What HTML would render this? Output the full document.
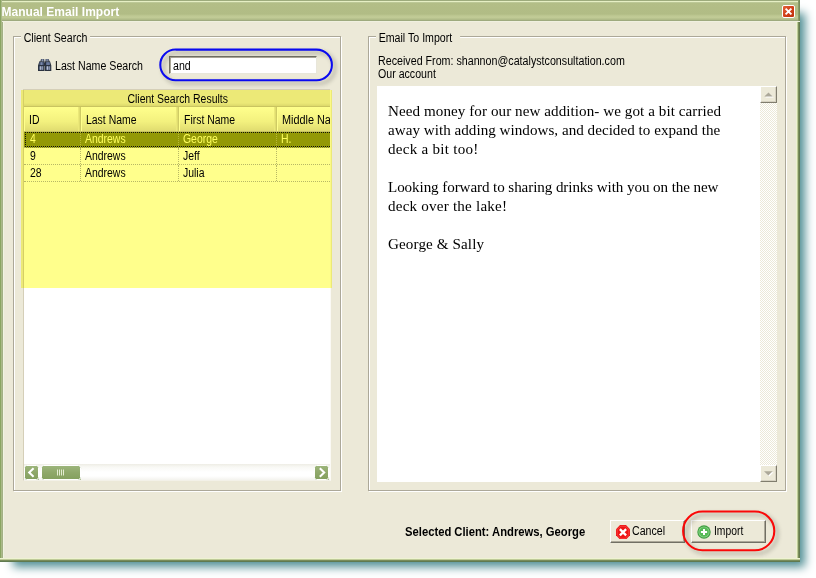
<!DOCTYPE html>
<html><head><meta charset="utf-8"><title>Manual Email Import</title>
<style>
html,body{margin:0;padding:0;}
body{width:816px;height:578px;position:relative;overflow:hidden;background:#fff;font-family:"Liberation Sans",sans-serif;font-size:11px;color:#000;}
.abs{position:absolute;}
#shadow{left:0;top:0;width:800px;height:562px;box-shadow:9px 9px 9px -4px #518f95;}
#win{left:0;top:0;width:800px;height:562px;background:#ece9d8;}
#title{left:2px;top:0;width:798px;height:22px;background:linear-gradient(#9dab7c 0,#9dab7c 1px,#e6efc4 1px,#e6efc4 2px,#bcc896 2px,#bcc896 3px,#b3be87 3px,#b1bc85 14px,#bfc994 16px,#c1cb96 18px,#b0bb88 19px,#b0bb88 20px,#9eaa7e 20px,#9eaa7e 21px,#f0f0e0 21px,#f0f0e0 22px);}
#title span{position:absolute;left:-0.5px;top:5px;font-weight:bold;font-size:12px;color:#fff;white-space:nowrap;letter-spacing:0.02px;}
#bl{left:0;top:0;width:4px;height:562px;background:linear-gradient(90deg,#8aa562 0,#8aa562 1px,#aab987 1px,#aab987 2px,#a3b085 2px,#a3b085 3px,#f1f4e2 3px,#f1f4e2 4px);}
#br{left:796px;top:21px;width:4px;height:541px;background:linear-gradient(90deg,#eef3d2 0,#eef3d2 1px,#bfcb98 1px,#bfcb98 2px,#7a8f5c 2px,#7a8f5c 3px,#647a4f 3px,#647a4f 4px);}
#bb{left:0;top:558px;width:800px;height:4px;background:linear-gradient(#eef3d2 0,#eef3d2 1px,#bfcb98 1px,#bfcb98 2px,#788c5a 2px,#788c5a 3px,#5f7a50 3px,#5f7a50 4px);}
.grp{border:1px solid #aca899;box-shadow:1px 1px 0 #fff, inset 1px 1px 0 #fff;}
.lbl{background:#ece9d8;white-space:nowrap;line-height:14px;font-size:12px;transform-origin:0 0;transform:scaleX(.885);}
.t{white-space:nowrap;line-height:14px;font-size:12px;transform-origin:0 0;transform:scaleX(.885);}

.sunk{border:1px solid;border-color:#aca899 #fff #fff #aca899;}
#grid{z-index:0;left:23px;top:89px;width:308px;height:392px;background:#fff;border:1px solid;border-color:#d5cfb8 #fbfaf5 #f3f1e8 #d5cfb8;box-sizing:border-box;overflow:hidden;}
#hl{z-index:1;left:21px;top:90px;width:311px;height:198px;background:#ffff8c;mix-blend-mode:multiply;}
.cap{left:0;top:0;width:308px;height:17px;box-sizing:border-box;background:linear-gradient(#ece9d8,#ece9d8 13px,#dcd8c4 16px);border-bottom:1px solid #c9c4ae;text-align:center;line-height:18px;}
.hd{top:17px;height:25px;z-index:2;background:linear-gradient(#fff,#f3f1e6 60%,#e0dccb);box-sizing:border-box;border-right:1px solid #cfcbb8;border-bottom:1px solid #c5c2b2;box-shadow:inset 1px 0 0 #fff, inset -1px 0 0 #e0ddcc, inset -2px 0 0 #ebe8da;line-height:27px;padding-left:5px;white-space:nowrap;overflow:hidden;}
.row{left:0;width:308px;height:17px;border-bottom:1px dotted #b8b8b8;box-sizing:border-box;}
.cell{position:absolute;top:0;height:16px;line-height:16px;padding-left:4px;box-sizing:border-box;border-right:1px dotted #b8b8b8;white-space:nowrap;overflow:hidden;}
.sel{background:#93990a;color:#ffffa8;}
.sel:after{content:"";position:absolute;left:1px;top:1px;right:0;bottom:0;border:1px dotted #111;border-right:none;}
.sel .cell{border-right-color:#b8b860;}
.btn{box-sizing:border-box;background:#ece9d8;border:1px solid;border-color:#fff #716f64 #716f64 #fff;box-shadow:inset -1px -1px 0 #aca899;}
.sb{background:#8fa66e;border:1px solid #fff;border-radius:2px;box-sizing:border-box;box-shadow:0 0 0 1px #a3b58a inset;}
.s{display:inline-block;font-size:12px;transform-origin:0 50%;transform:scaleX(.87);}
</style></head><body>
<div id="shadow" class="abs"></div>
<div id="win" class="abs"></div>
<div id="bl" class="abs"></div><div id="br" class="abs"></div><div id="bb" class="abs"></div>
<div id="title" class="abs"><span>Manual Email Import</span></div>

<div class="abs" style="left:798px;top:0;width:2px;height:21px;background:linear-gradient(90deg,#93a472,#6f8552);"></div>
<div class="abs" style="left:782px;top:5px;width:13px;height:13px;box-sizing:border-box;border:1px solid #fff;border-radius:2px;background:linear-gradient(135deg,#e2623a,#d2411a 50%,#bf300c);"></div>
<svg class="abs" style="left:783px;top:6px" width="11" height="11" viewBox="0 0 11 11"><path d="M2.6 2.6 L8.4 8.4 M8.4 2.6 L2.6 8.4" stroke="#fff" stroke-width="1.9" stroke-linecap="butt"/></svg>
<!-- left group -->
<div class="abs grp" style="left:13px;top:36px;width:326px;height:453px;"></div>
<div class="abs lbl" style="left:20.5px;top:31px;padding:0 3px;">Client Search</div>
<!-- right group -->
<div class="abs grp" style="left:368px;top:36px;width:416px;height:453px;"></div>
<div class="abs lbl" style="left:376px;top:31px;padding:0 9px 0 3px;">Email To Import</div>

<!-- search row -->
<svg class="abs" style="left:38px;top:59px" width="14" height="12" viewBox="0 0 14 12">
 <path d="M3 0h3.2l.3 2.4h-4.3z M7.5 0h3.2l1 2.4h-4.4z" fill="#525d74"/>
 <path d="M1.4 2.2h5.2v9.8h-6.6v-5.6z M7 2.2h5l1.3 4.2v5.6h-6.3z" fill="#2b3340"/>
 <rect x="5.8" y="3.6" width="2" height="3.4" fill="#2b3340"/>
 <rect x="1.5" y="3.2" width="4" height="2.8" fill="#5a6a8e"/>
 <rect x="8" y="3.2" width="4" height="2.8" fill="#5a6a8e"/>
 <rect x="1.2" y="7.3" width="4.2" height="3.5" fill="#66748f"/>
 <rect x="8" y="7.3" width="4.2" height="3.5" fill="#66748f"/>
 <rect x="2.1" y="7.3" width="1" height="3.5" fill="#b9c0d3"/><rect x="4" y="7.3" width=".8" height="3.5" fill="#949eb8"/>
 <rect x="9" y="7.3" width="1" height="3.5" fill="#b9c0d3"/><rect x="10.9" y="7.3" width=".8" height="3.5" fill="#949eb8"/>
 <rect x="4" y="0.3" width=".8" height="2" fill="#a4adc3"/><rect x="8.7" y="0.3" width=".8" height="2" fill="#a4adc3"/>
 <rect x="3" y="3.2" width=".8" height="2.8" fill="#8391b0"/><rect x="9.6" y="3.2" width=".8" height="2.8" fill="#8391b0"/>
</svg>
<div class="abs t" style="left:55px;top:59px;">Last Name Search</div>
<div class="abs" style="left:169px;top:56px;width:148px;height:18px;box-sizing:border-box;background:#fff;border:1px solid;border-color:#716f64 #e8e6da #e8e6da #716f64;box-shadow:inset 1px 1px 0 #aca899;"></div>
<div class="abs t" style="left:173px;top:59px;">and</div>
<svg class="abs" style="left:155px;top:44px;filter:drop-shadow(3px 3px 2.2px rgba(70,70,60,.45));" width="190" height="46" viewBox="0 0 190 46"><rect x="5.3" y="5.6" width="171.6" height="30.6" rx="15.3" fill="none" stroke="#0a0af0" stroke-width="2.05"/></svg>

<!-- grid -->
<div id="grid" class="abs">
 <div class="abs cap"><span class="s" style="transform-origin:50% 50%">Client Search Results</span></div>
 <div class="abs hd" style="left:0;width:57px;"><span class="s">ID</span></div>
 <div class="abs hd" style="left:57px;width:98px;"><span class="s">Last Name</span></div>
 <div class="abs hd" style="left:155px;width:98px;"><span class="s">First Name</span></div>
 <div class="abs hd" style="left:253px;width:98px;"><span class="s" style="transform:scaleX(.905)">Middle Name</span></div>
 <div class="abs row sel" style="top:41px;"><div class="cell" style="left:0;width:57px;padding-left:6px;"><span class="s">4</span></div><div class="cell" style="left:57px;width:98px;"><span class="s">Andrews</span></div><div class="cell" style="left:155px;width:98px;"><span class="s">George</span></div><div class="cell" style="left:253px;width:98px;"><span class="s">H.</span></div></div>
 <div class="abs row" style="top:58px;"><div class="cell" style="left:0;width:57px;padding-left:6px;"><span class="s">9</span></div><div class="cell" style="left:57px;width:98px;"><span class="s">Andrews</span></div><div class="cell" style="left:155px;width:98px;"><span class="s">Jeff</span></div><div class="cell" style="left:253px;width:98px;"></div></div>
 <div class="abs row" style="top:75px;"><div class="cell" style="left:0;width:57px;padding-left:6px;"><span class="s">28</span></div><div class="cell" style="left:57px;width:98px;"><span class="s">Andrews</span></div><div class="cell" style="left:155px;width:98px;"><span class="s">Julia</span></div><div class="cell" style="left:253px;width:98px;"></div></div>
 <!-- h scrollbar -->
 <div class="abs" style="left:0;top:374px;width:306px;height:17px;background:linear-gradient(#eeede5,#f8f8f4 3px,#fff 8px,#fff 12px,#f1f0ea 17px);"></div>
 <svg class="abs" style="left:0;top:375px" width="16" height="16" viewBox="0 0 16 16">
  <defs><linearGradient id="gb" x1="0" y1="0" x2="0" y2="1"><stop offset="0" stop-color="#9db67c"/><stop offset=".5" stop-color="#8fa86a"/><stop offset="1" stop-color="#84a05e"/></linearGradient></defs>
  <rect x="1" y="1.6" width="14" height="14" rx="2" fill="#7f9c5c" opacity=".8"/>
  <rect x=".5" y=".5" width="14" height="14" rx="2" fill="url(#gb)" stroke="#fff"/>
  <path d="M9.6 3.2 L5.2 7.5 L9.6 11.8" fill="none" stroke="#fff" stroke-width="2.05"/>
 </svg>
 <svg class="abs" style="left:17px;top:375px" width="41" height="16" viewBox="0 0 41 16">
  <rect x="1" y="1.6" width="39" height="14" rx="2" fill="#7f9c5c" opacity=".8"/>
  <rect x=".5" y=".5" width="39" height="14" rx="2" fill="url(#gb)" stroke="#fff"/>
  <path d="M16.5 4.5v6M18.5 4.5v6M20.5 4.5v6M22.5 4.5v6" stroke="#e4edd2" stroke-width="1"/>
 </svg>
 <svg class="abs" style="left:290px;top:375px" width="16" height="16" viewBox="0 0 16 16">
  <rect x="1" y="1.6" width="14" height="14" rx="2" fill="#7f9c5c" opacity=".8"/>
  <rect x=".5" y=".5" width="14" height="14" rx="2" fill="url(#gb)" stroke="#fff"/>
  <path d="M5.8 3.2 L10.2 7.5 L5.8 11.8" fill="none" stroke="#fff" stroke-width="2.05"/>
 </svg>
</div>
<div id="hl" class="abs"></div>

<!-- email -->
<div class="abs t" style="left:378px;top:54px;transform:scaleX(.891)">Received From: shannon@catalystconsultation.com</div>
<div class="abs t" style="left:378px;top:67px;">Our account</div>
<div class="abs" style="left:377px;top:86px;width:400px;height:396px;background:#fff;"></div>
<div class="abs" style="left:388px;top:102px;width:360px;font-family:'Liberation Serif',serif;font-size:15.1px;line-height:19px;white-space:nowrap;"><span style="letter-spacing:.07px">Need money for our new addition- we got a bit carried</span><br><span style="letter-spacing:.03px">away with adding windows, and decided to expand the</span><br><span style="letter-spacing:.26px">deck a bit too!</span><br><br><span style="letter-spacing:-.085px">Looking forward to sharing drinks with you on the new</span><br><span style="letter-spacing:.21px">deck over the lake!</span><br><br><span style="letter-spacing:.12px">George &amp; Sally</span></div>
<!-- v scrollbar -->
<div class="abs" style="left:760px;top:86px;width:17px;height:396px;background:conic-gradient(#fff 25%,#ece9d8 0 50%,#fff 0 75%,#ece9d8 0) 0 0/2px 2px;"></div>
<div class="abs btn" style="left:760px;top:86px;width:17px;height:17px;border-color:#fff #807d6e #807d6e #fff;box-shadow:inset -1px -1px 0 #d6d2c2;"></div>
<div class="abs btn" style="left:760px;top:465px;width:17px;height:17px;border-color:#fff #807d6e #807d6e #fff;box-shadow:inset -1px -1px 0 #d6d2c2;"></div>
<svg class="abs" style="left:760px;top:86px" width="17" height="17" viewBox="0 0 17 17"><path d="M5.3 11.6 L9.5 7.4 L13.7 11.6z" fill="#fff"/><path d="M4.3 10.6 L8.5 6.4 L12.7 10.6z" fill="#aca899"/></svg>
<svg class="abs" style="left:760px;top:465px" width="17" height="17" viewBox="0 0 17 17"><path d="M5.0 7.2 L13.6 7.2 L9.3 11.5z" fill="#fff"/><path d="M4 6.2 L12.6 6.2 L8.3 10.5z" fill="#aca899"/></svg>

<!-- bottom -->
<div class="abs t" style="left:405px;top:525px;font-weight:bold;transform:scaleX(.937);">Selected Client: Andrews, George</div>
<div class="abs btn" style="left:610px;top:520px;width:75px;height:23px;"></div>
<div class="abs t" style="left:631.5px;top:524px;">Cancel</div>
<div class="abs btn" style="left:691px;top:520px;width:75px;height:23px;"></div>
<div class="abs t" style="left:714px;top:524px;transform:scaleX(.86)">Import</div>
<svg class="abs" style="left:616px;top:524.5px" width="14" height="14.5" viewBox="0 0 14 14.5">
 <path d="M4 0h6l4 4.2v6.1l-4 4.2h-6l-4-4.2v-6.1z" fill="#ee1414"/>
 <path d="M4.5 1.2h5l3.3 3.5v5.1l-3.3 3.5h-5l-3.3-3.5v-5.1z" fill="none" stroke="#f66" stroke-width=".7" opacity=".7"/>
 <path d="M3.9 4.1 L10.1 10.4 M10.1 4.1 L3.9 10.4" stroke="#fff" stroke-width="2.3"/>
</svg>
<svg class="abs" style="left:697px;top:525px" width="14" height="14" viewBox="0 0 14 14">
 <circle cx="7" cy="7" r="6.7" fill="#3f9e40"/>
 <circle cx="7" cy="7" r="5.6" fill="#8ad48a"/>
 <circle cx="7" cy="7" r="4.7" fill="#55b955"/>
 <path d="M3.9 7h6.2M7 3.9v6.2" stroke="#fff" stroke-width="2"/>
</svg>
<svg class="abs" style="left:678px;top:506px;filter:drop-shadow(3px 3px 2.2px rgba(70,70,60,.45));" width="110" height="54" viewBox="0 0 110 54"><rect x="5.1" y="5.5" width="91.2" height="38.8" rx="19.4" fill="none" stroke="#fa0808" stroke-width="2.05"/></svg>

</body></html>
